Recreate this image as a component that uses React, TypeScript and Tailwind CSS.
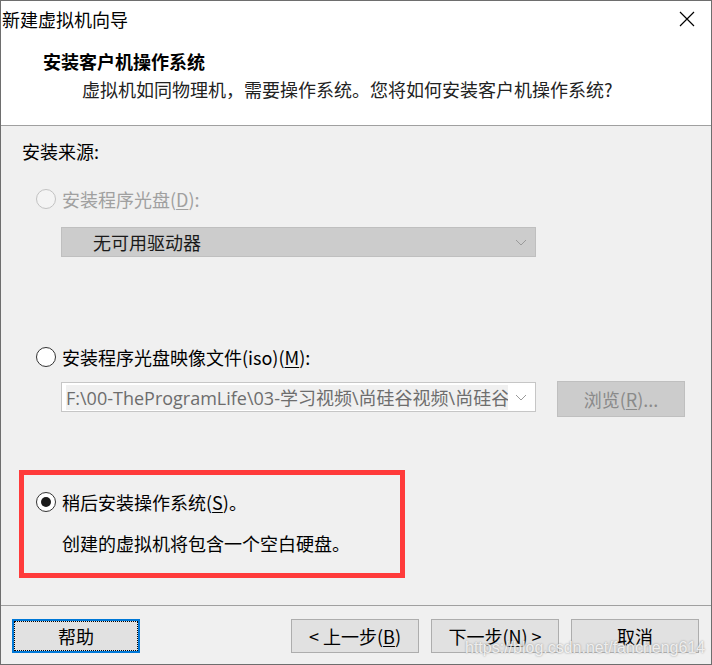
import React from 'react';

const cjk = '"Microsoft YaHei", "Noto Sans CJK SC", "Noto Sans", sans-serif';

type RadioProps = { checked?: boolean; disabled?: boolean };

const Radio: React.FC<RadioProps> = ({ checked, disabled }) => (
  <span
    className={`flex items-center justify-center w-[20px] h-[20px] rounded-full border ${
      disabled ? 'border-[#c2c2c2] bg-[#f4f4f4]' : 'border-[#333333] bg-white'
    }`}
  >
    {checked && <span className="w-[10px] h-[10px] rounded-full bg-[#1a1a1a]" />}
  </span>
);

const Chevron: React.FC<{ color: string }> = ({ color }) => (
  <svg width="12" height="7" viewBox="0 0 12 7">
    <path d="M1 1 L6 6 L11 1" fill="none" stroke={color} strokeWidth="1" />
  </svg>
);

const Button: React.FC<{ children: React.ReactNode; focused?: boolean }> = ({ children, focused }) => (
  <button
    className={`w-[128px] h-[34px] bg-[#e1e1e1] text-[18px] leading-none text-black flex items-center justify-center ${
      focused ? 'border-2 border-[#0078d7]' : 'border border-[#adadad]'
    }`}
  >
    {focused ? (
      <span className="w-full h-full border border-dotted border-black flex items-center justify-center">
        {children}
      </span>
    ) : (
      children
    )}
  </button>
);

export default function App() {
  return (
    <div
      className="relative w-[712px] h-[665px] border border-[#6e6e6e] bg-[#f0f0f0] flex flex-col overflow-hidden"
      style={{ fontFamily: cjk }}
    >
      {/* 标题栏 + 页头 */}
      <div className="bg-white h-[125px] border-b border-[#a0a0a0] shrink-0">
        <div className="h-[36px] flex items-center justify-between">
          <span className="pl-[1px] text-[18px] leading-[24px] text-black">新建虚拟机向导</span>
          <svg width="16" height="16" viewBox="0 0 16 16" className="mr-[16px]">
            <path d="M1 1 L15 15 M15 1 L1 15" stroke="#000" strokeWidth="1.2" />
          </svg>
        </div>
        <div className="pl-[42px] pt-[12px] text-[18px] leading-[24px] font-bold text-black">
          安装客户机操作系统
        </div>
        <div className="pl-[81px] pt-[4px] text-[18px] leading-[24px] text-[#222]">
          虚拟机如同物理机，需要操作系统。您将如何安装客户机操作系统?
        </div>
      </div>

      {/* 内容 */}
      <div className="flex-1 flex flex-col">
        <div className="pl-[21px] pt-[13px] text-[18px] leading-[24px] text-black">安装来源:</div>

        <div className="flex items-center ml-[35px] mt-[24px] h-[24px]">
          <Radio disabled />
          <span className="ml-[6px] text-[18px] leading-[24px] text-[#a0a0a0]">
            安装程序光盘(<span className="underline underline-offset-2">D</span>):
          </span>
        </div>

        <div className="ml-[60px] mt-[16px] w-[475px] h-[30px] bg-[#cccccc] border border-[#bfbfbf] flex items-center justify-between pl-[31px] pr-[8px]">
          <span className="text-[18px] leading-[24px] text-[#1a1a1a]">无可用驱动器</span>
          <Chevron color="#9a9a9a" />
        </div>

        <div className="flex items-center ml-[35px] mt-[88px] h-[24px]">
          <Radio />
          <span className="ml-[6px] text-[18px] leading-[24px] text-black">
            安装程序光盘映像文件(iso)(<span className="underline underline-offset-2">M</span>):
          </span>
        </div>

        <div className="flex items-start ml-[60px] mt-[12px]">
          <div className="w-[475px] h-[30px] mt-[1px] bg-white border border-[#c6c6c6] flex items-center pl-[4px] pr-[8px]">
            <span className="w-[442px] overflow-hidden whitespace-nowrap bg-[#f0f0f0] text-[18px] leading-[24px] text-[#6d6d6d]">
              <span style={{ fontFamily: '"Segoe UI", "Open Sans", "Noto Sans CJK SC", sans-serif' }}>
                F:\00-TheProgramLife\03-学习视频\尚硅谷视频\尚硅谷-学习视频
              </span>
            </span>
            <span className="ml-auto">
              <Chevron color="#9a9a9a" />
            </span>
          </div>
          <div className="ml-[21px] w-[128px] h-[36px] bg-[#cccccc] border border-[#bfbfbf] flex items-center justify-center text-[18px] leading-[24px] text-[#8a8a8a]">
            浏览(<span className="underline underline-offset-2">R</span>)...
          </div>
        </div>

        <div className="ml-[18px] mt-[53px] w-[386px] h-[108px] border-[5px] border-[#ff3b3b] pl-[12px] pt-[15px]">
          <div className="flex items-center h-[24px]">
            <Radio checked />
            <span className="ml-[6px] text-[18px] leading-[24px] text-black">
              稍后安装操作系统(<span className="underline underline-offset-2">S</span>)。
            </span>
          </div>
          <div className="mt-[17px] pl-[26px] text-[18px] leading-[24px] text-black">
            创建的虚拟机将包含一个空白硬盘。
          </div>
        </div>
      </div>

      {/* 底部按钮 */}
      <div className="h-[59px] shrink-0 border-t border-[#a0a0a0] flex items-start pt-[13px] pl-[11px] pr-[12px]">
        <Button focused>帮助</Button>
        <div className="ml-auto flex gap-[12px]">
          <Button>
            &lt; 上一步(<span className="underline underline-offset-2">B</span>)
          </Button>
          <Button>
            下一步(<span className="underline underline-offset-2">N</span>) &gt;
          </Button>
          <Button>取消</Button>
        </div>
      </div>

      {/* 水印 */}
      <div
        className="absolute left-[464px] top-[636px] text-[16px] leading-[22px] text-white/80 [text-shadow:0_0_2px_#8a8a8a]"
        style={{ fontFamily: '"Liberation Sans", Arial, sans-serif' }}
      >
        https://blog.csdn.net/fancheng614
      </div>
    </div>
  );
}
